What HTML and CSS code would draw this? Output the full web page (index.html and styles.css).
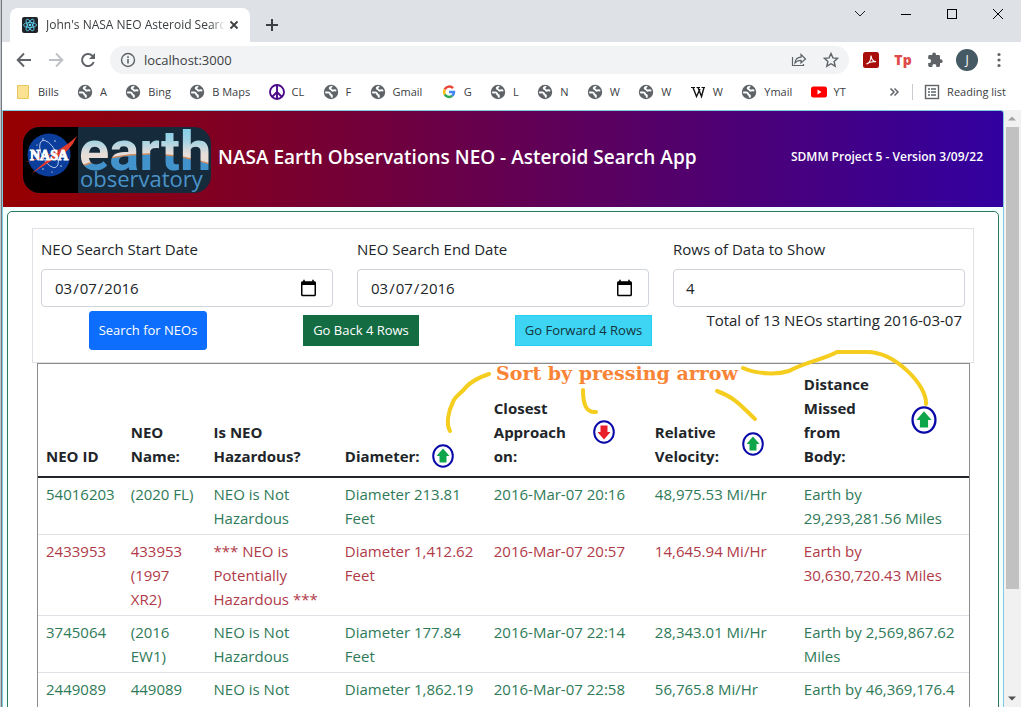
FILE: index.html
```
<!DOCTYPE html>
<html lang="en">
<head>
<meta charset="utf-8">
<title>John's NASA NEO Asteroid Search</title>
<link rel="stylesheet" href="styles.css">
</head>
<body>
<svg class="sprite" aria-hidden="true">
  <symbol id="globe" viewBox="0 0 16 16"><circle cx="8" cy="8" r="7.2" fill="#5f6368"/><path d="M2.2 8.2c1.6.9 2.3-.3 3.9.4 1.500.7.500 2 2 2.300.900.2 1 .9.400 2.700M9 2.200c-.6 1.200-2.300.8-2.300 2.100 0 1 1.600.500 1.800 1.400.2 1.100 1.200 1.300 2.200.7.9-.5 1.700.2 2.600.200" fill="none" stroke="#fff" stroke-width="1.900"/></symbol>
  <symbol id="sort-up" viewBox="0 0 22 24"><ellipse cx="11" cy="12" rx="9.800" ry="10.800" fill="#fff" stroke="#0a0aa8" stroke-width="2"/><path d="M11 4.500l6.500 7.500h-3v6.500h-7V12h-3z" fill="#0fa64b"/></symbol>
  <symbol id="sort-down" viewBox="0 0 22 24"><ellipse cx="11" cy="12" rx="9.800" ry="10.800" fill="#fff" stroke="#0a0aa8" stroke-width="2"/><path d="M11 19.500l6.500-7.500h-3V5.500h-7V12h-3z" fill="#e8202a"/></symbol>
</svg>
<div class="window">
  <header class="tabstrip">
    <div class="tab">
      <svg class="favicon" viewBox="0 0 16 16"><rect width="16" height="16" rx="2" fill="#20232a"/><g fill="none" stroke="#61dafb" stroke-width=".8"><ellipse cx="8" cy="8" rx="6.500" ry="2.500"/><ellipse cx="8" cy="8" rx="6.500" ry="2.500" transform="rotate(60 8 8)"/><ellipse cx="8" cy="8" rx="6.500" ry="2.500" transform="rotate(120 8 8)"/></g><circle cx="8" cy="8" r="1.300" fill="#61dafb"/></svg>
      <span class="tab-title">John's NASA NEO Asteroid Search</span>
      <button class="icon-btn" aria-label="Close tab"><svg width="10" height="10" viewBox="0 0 10 10"><path d="M1.500 1.500l7 7M8.500 1.500l-7 7" stroke="#3c4043" stroke-width="1.800"/></svg></button>
    </div>
    <button class="icon-btn new-tab" aria-label="New tab"><svg width="12" height="12" viewBox="0 0 12 12"><path d="M6 0v12M0 6h12" stroke="#3c4043" stroke-width="2"/></svg></button>
    <div class="window-buttons">
      <button class="icon-btn" aria-label="Search tabs"><svg width="12" height="12" viewBox="0 0 12 12"><path d="M1 3l5 5 5-5" fill="none" stroke="#222"/></svg></button>
      <button class="icon-btn" aria-label="Minimize"><svg width="12" height="12" viewBox="0 0 12 12"><path d="M1 6.500h10" stroke="#000"/></svg></button>
      <button class="icon-btn" aria-label="Maximize"><svg width="12" height="12" viewBox="0 0 12 12"><rect x="1.500" y="1.500" width="9" height="9" fill="none" stroke="#000"/></svg></button>
      <button class="icon-btn" aria-label="Close"><svg width="12" height="12" viewBox="0 0 12 12"><path d="M1 1l10 10M11 1L1 11" stroke="#000"/></svg></button>
    </div>
  </header>

  <div class="toolbar">
    <button class="icon-btn" aria-label="Back"><svg width="16" height="16" viewBox="0 0 16 16"><path d="M15 8H2M8 1.500L1.700 8 8 14.500" fill="none" stroke="#5f6368" stroke-width="1.900"/></svg></button>
    <button class="icon-btn" aria-label="Forward"><svg width="16" height="16" viewBox="0 0 16 16"><path d="M1 8h13M8 1.500L14.300 8 8 14.500" fill="none" stroke="#bdc1c6" stroke-width="1.900"/></svg></button>
    <button class="icon-btn" aria-label="Reload"><svg width="16" height="16" viewBox="0 0 16 16"><path d="M13.700 10A6 6 0 1 1 12.300 3.800L14 5.500" fill="none" stroke="#5f6368" stroke-width="2"/><path d="M15 1v6H9z" fill="#5f6368"/></svg></button>
    <div class="omnibox">
      <svg width="16" height="16" viewBox="0 0 16 16"><circle cx="8" cy="8" r="6.500" fill="none" stroke="#5f6368" stroke-width="1.400"/><path d="M8 7v4.500M8 4.300V6" stroke="#5f6368" stroke-width="1.600"/></svg>
      <input class="url" type="text" value="localhost:3000" aria-label="Address">
      <button class="icon-btn" aria-label="Share"><svg width="16" height="16" viewBox="0 0 16 16"><path d="M1.500 5v8.500h11V12M4 11c.3-3.500 2.300-5.500 6-5.800V2.500L14.500 7 10 11V8.300C7.500 8.300 5.500 9 4 11z" fill="none" stroke="#5f6368" stroke-width="1.200"/></svg></button>
      <button class="icon-btn" aria-label="Bookmark"><svg width="16" height="16" viewBox="0 0 16 16"><path d="M8 1.500l1.900 4.400 4.800.4-3.600 3.200 1.100 4.700L8 11.700l-4.200 2.500 1.100-4.700L1.300 6.300l4.800-.4z" fill="none" stroke="#5f6368" stroke-width="1.400"/></svg></button>
    </div>
    <div class="extensions">
      <button class="icon-btn" aria-label="Adobe Acrobat"><svg width="16" height="16" viewBox="0 0 16 16"><rect width="16" height="16" rx="2.500" fill="#a80f0a"/><path d="M3.500 12C6 11.500 8 8 8 3.500c.4 4 2 6 5 6.200-3.500-.4-6.500 0-9.500 2.300z" fill="none" stroke="#fff" stroke-width="1.200"/></svg></button>
      <button class="icon-btn tp" aria-label="Tp extension">Tp</button>
      <button class="icon-btn" aria-label="Extensions"><svg width="16" height="16" viewBox="0 0 16 16"><path d="M13.800 7.300h-.8V4.500c0-.8-.6-1.400-1.400-1.400H9V2.500a1.900 1.900 0 0 0-3.800 0v.600H2.600c-.8 0-1.400.6-1.400 1.400v2.500h.9a2 2 0 0 1 0 4h-.9v2.600c0 .8.600 1.400 1.400 1.400h2.700v-.9a2 2 0 0 1 4 0v.9h2.300c.8 0 1.400-.6 1.400-1.400V11h.8a1.850 1.850 0 0 0 0-3.700z" fill="#5f6368"/></svg></button>
      <button class="avatar" aria-label="Profile J">J</button>
      <button class="icon-btn" aria-label="Menu"><svg width="16" height="16" viewBox="0 0 16 16" fill="#5f6368"><circle cx="8" cy="2.500" r="1.600"/><circle cx="8" cy="8" r="1.600"/><circle cx="8" cy="13.500" r="1.600"/></svg></button>
    </div>
  </div>

  <nav class="bookmarks" aria-label="Bookmarks">
    <div class="bookmark-list">
      <a href="#"><svg viewBox="0 0 16 16"><path d="M2.500 1.500h11v13h-11z" fill="#fde293" stroke="#e6c65c"/><path d="M12 11.500h2v3h-2z" fill="#f9d66b"/></svg>Bills</a>
      <a href="#"><svg><use href="#globe"/></svg>A</a>
      <a href="#"><svg><use href="#globe"/></svg>Bing</a>
      <a href="#"><svg><use href="#globe"/></svg>B Maps</a>
      <a href="#"><svg viewBox="0 0 16 16"><g fill="none" stroke="#4b0a8a" stroke-width="1.900"><circle cx="8" cy="8" r="7"/><path d="M8 1v14M8 8l-5 5M8 8l5 5"/></g></svg>CL</a>
      <a href="#"><svg><use href="#globe"/></svg>F</a>
      <a href="#"><svg><use href="#globe"/></svg>Gmail</a>
      <a href="#"><svg viewBox="0 0 16 16"><g fill="none" stroke-width="2.500"><path d="M12 4.200A5 5 0 0 0 3.700 5.600" stroke="#ea4335"/><path d="M3.700 5.600a5 5 0 0 0 0 4.800" stroke="#fbbc05"/><path d="M3.700 10.400a5 5 0 0 0 7.500 1.400" stroke="#34a853"/><path d="M11.200 11.800A5 5 0 0 0 13 8H8" stroke="#4285f4"/></g></svg>G</a>
      <a href="#"><svg><use href="#globe"/></svg>L</a>
      <a href="#"><svg><use href="#globe"/></svg>N</a>
      <a href="#"><svg><use href="#globe"/></svg>W</a>
      <a href="#"><svg><use href="#globe"/></svg>W</a>
      <a href="#"><svg viewBox="0 0 16 16"><path d="M1 3.500h4M6.500 3.500h3.500M11.500 3.500H15" stroke="#111"/><path d="M3 3.500l3.500 9L10 5M8 3.500l3.500 9 2.500-9" fill="none" stroke="#111" stroke-width="1.400"/></svg>W</a>
      <a href="#"><svg><use href="#globe"/></svg>Ymail</a>
      <a href="#"><svg viewBox="0 0 16 16"><rect y="2.500" width="16" height="11" rx="2.500" fill="#f00"/><path d="M6.500 5.500v5l4-2.500z" fill="#fff"/></svg>YT</a>
    </div>
    <div class="bookmark-end">
      <button class="icon-btn" aria-label="More bookmarks"><svg width="10" height="10" viewBox="0 0 10 10"><path d="M1.500 1.500L5 5 1.500 8.500M5.500 1.500L9 5 5.500 8.500" fill="none" stroke="#5f6368" stroke-width="1.500"/></svg></button>
      <a class="reading" href="#"><svg viewBox="0 0 16 16"><g fill="none" stroke="#5f6368" stroke-width="1.400"><rect x="1.500" y="1.500" width="13" height="13"/><path d="M4 5h2M7 5h5M4 8h2M7 8h5M4 11h2M7 11h5"/></g></svg>Reading list</a>
    </div>
  </nav>

  <div class="viewport">
    <div class="app">
      <header class="banner">
        <svg class="logo" viewBox="0 0 188 66" role="img" aria-label="NASA Earth Observatory">
          <defs>
            <clipPath id="pill"><rect width="188" height="66" rx="17"/></clipPath>
            <linearGradient id="sky" x1="0" y1="0" x2="0" y2="44" gradientUnits="userSpaceOnUse"><stop offset="0" stop-color="#7fd0ea"/><stop offset=".3" stop-color="#a0d3e4"/><stop offset=".62" stop-color="#e9ddd8"/></linearGradient>
            <pattern id="planet" width="188" height="66" patternUnits="userSpaceOnUse">
              <rect width="188" height="66" fill="url(#sky)"/>
              <path d="M50 42Q120 14 190 38V66H50z" fill="#4292cb" stroke="#c98a62" stroke-width="1.500"/>
            </pattern>
          </defs>
          <g clip-path="url(#pill)">
            <rect width="188" height="66" fill="#152a3a"/><rect width="55" height="66" fill="#000"/>
            <circle cx="26" cy="28" r="21.500" fill="#0b3d9c"/>
            <ellipse cx="26" cy="27" rx="7" ry="15" transform="rotate(-28 26 27)" fill="none" stroke="#c9d6f2" stroke-width=".8"/>
            <path d="M2 35Q36 27 54 9Q47 26 31 32L8 47Q24 33 42 19Q28 31 2 35z" fill="#e23a2c"/>
            <g fill="#fff"><circle cx="20" cy="12" r=".7"/><circle cx="32" cy="14" r=".7"/><circle cx="14" cy="18" r=".6"/><circle cx="38" cy="39" r=".7"/><circle cx="20" cy="42" r=".7"/><circle cx="29" cy="45" r=".6"/></g>
            <text class="logo-nasa" x="26" y="33" text-anchor="middle">NASA</text>
            <text class="logo-earth" x="56" y="43">earth</text>
            <text class="logo-obs" x="57" y="60">observatory</text>
          </g>
        </svg>
        <h1>NASA Earth Observations NEO - Asteroid Search App</h1>
        <p class="version">SDMM Project 5 - Version 3/09/22</p>
      </header>

      <main class="card">
        <form class="search">
          <div class="fields">
            <label>NEO Search Start Date<input type="date" value="2016-03-07"></label>
            <label>NEO Search End Date<input type="date" value="2016-03-07"></label>
            <label>Rows of Data to Show<input type="text" value="4"></label>
          </div>
          <div class="actions">
            <button type="button" class="btn primary">Search for NEOs</button>
            <button type="button" class="btn back">Go Back 4 Rows</button>
            <button type="button" class="btn forward">Go Forward 4 Rows</button>
            <p class="total">Total of 13 NEOs starting 2016-03-07</p>
          </div>
        </form>

        <div class="results">
          <table>
            <colgroup><col class="c-id"><col class="c-name"><col class="c-haz"><col class="c-dia"><col class="c-date"><col class="c-vel"><col class="c-dist"></colgroup>
            <thead>
              <tr>
                <th>NEO ID</th>
                <th>NEO Name:</th>
                <th>Is NEO Hazardous?</th>
                <th><div class="sortable"><span>Diameter:</span><button aria-label="Sort by diameter"><svg><use href="#sort-up"/></svg></button></div></th>
                <th><div class="sortable"><span>Closest Approach on:</span><button aria-label="Sort by approach"><svg><use href="#sort-down"/></svg></button></div></th>
                <th><div class="sortable"><span>Relative Velocity:</span><button aria-label="Sort by velocity"><svg><use href="#sort-up"/></svg></button></div></th>
                <th><div class="sortable large"><span>Distance Missed from Body:</span><button aria-label="Sort by distance"><svg><use href="#sort-up"/></svg></button></div></th>
              </tr>
            </thead>
            <tbody>
              <tr class="safe"><td>54016203</td><td>(2020 FL)</td><td>NEO is Not Hazardous</td><td>Diameter 213.81 Feet</td><td>2016-Mar-07 20:16</td><td>48,975.53 Mi/Hr</td><td>Earth by 29,293,281.56 Miles</td></tr>
              <tr class="hazard"><td>2433953</td><td>433953 (1997 XR2)</td><td>*** NEO is Potentially Hazardous ***</td><td>Diameter 1,412.62 Feet</td><td>2016-Mar-07 20:57</td><td>14,645.94 Mi/Hr</td><td>Earth by 30,630,720.43 Miles</td></tr>
              <tr class="safe"><td>3745064</td><td>(2016 EW1)</td><td>NEO is Not Hazardous</td><td>Diameter 177.84 Feet</td><td>2016-Mar-07 22:14</td><td>28,343.01 Mi/Hr</td><td>Earth by 2,569,867.62 Miles</td></tr>
              <tr class="safe"><td>2449089</td><td>449089</td><td>NEO is Not Hazardous</td><td>Diameter 1,862.19 Feet</td><td>2016-Mar-07 22:58</td><td>56,765.8 Mi/Hr</td><td>Earth by 46,369,176.4 Miles</td></tr>
            </tbody>
          </table>
          <svg class="notes" viewBox="440 345 495 95">
            <g fill="none" stroke="#f5cd1e" stroke-width="4" stroke-linecap="round" stroke-linejoin="round">
              <path d="M490 374Q475 379 467 387C462 394 456 396 454 402C449 412 447 424 451 431"/>
              <path d="M584 390C584 404 587 413 597 412"/>
              <path d="M718 391C737 398 742 406 756 419"/>
              <path d="M744 368C758 374 777 375 790 371C806 362 826 359 838 352H868C896 352 928 385 927 404"/>
            </g>
            <text class="note-text" x="497" y="380">Sort by pressing arrow</text>
          </svg>
        </div>
      </main>
    </div>
    <div class="scrollbar" aria-hidden="true">
      <svg viewBox="0 0 16 17"><path d="M4 10.500h8L8 6.500z" fill="#a3a3a3"/></svg>
      <div class="track"><div class="thumb"></div></div>
      <svg viewBox="0 0 16 17"><path d="M4 6.500h8l-4 4z" fill="#505050"/></svg>
    </div>
  </div>
</div>
</body>
</html>
```

FILE: styles.css
```
* { box-sizing: border-box; }

body {
  margin: 0;
  height: 100vh;
  overflow: hidden;
  border-left: 1px solid #c4c8cc;
  font-family: "Open Sans", "Noto Sans", sans-serif;
  font-size: 15px;
  line-height: 24px;
  color: #212529;
  background: #fff;
}

button, input { font: inherit; color: inherit; }
a { color: inherit; text-decoration: none; }
h1, p { margin: 0; }
svg { display: block; flex: none; }
.sprite { position: absolute; width: 0; height: 0; }

.window {
  display: flex;
  flex-direction: column;
  height: 100%;
  border-left: 1px solid #74797d;
}

.icon-btn {
  display: flex;
  align-items: center;
  justify-content: center;
  flex: none;
  padding: 0;
  border: 0;
  background: none;
}

/* Browser frame */
.tabstrip {
  display: flex;
  flex: none;
  height: 42px;
  padding-left: 8px;
  background: #dee1e6;
}
.tab {
  display: flex;
  align-items: center;
  gap: 8px;
  width: 240px;
  margin-top: 8px;
  padding: 0 11px 0 12px;
  border-radius: 8px 8px 0 0;
  background: #fff;
  font-size: 12px;
  color: #3c4043;
}
.favicon { width: 16px; height: 16px; }
.tab-title {
  flex: 1;
  margin-right: -4px;
  overflow: hidden;
  white-space: nowrap;
  mask-image: linear-gradient(to right, #000 92%, transparent);
}
.new-tab { margin: 8px 0 0 16px; }
.window-buttons {
  display: flex;
  align-items: center;
  gap: 34px;
  height: 28px;
  margin-left: auto;
  padding-right: 17px;
}

.toolbar {
  display: flex;
  align-items: center;
  flex: none;
  gap: 16px;
  height: 36px;
  padding: 0 14px;
}
.omnibox {
  display: flex;
  align-items: center;
  flex: 1;
  gap: 16px;
  height: 28px;
  margin-left: -2px;
  padding: 0 10px;
  border-radius: 14px;
  background: #f1f3f4;
}
.url {
  flex: 1;
  min-width: 0;
  margin-left: -8px;
  padding: 0;
  border: 0;
  background: none;
  font-size: 13px;
  color: #3c4043;
}
.extensions { display: flex; align-items: center; gap: 16px; margin-left: -2px; }
.extensions .avatar { margin: 0 -3px; }
.tp { width: 16px; font-size: 14px; font-weight: 800; color: #e04a48; }
.avatar {
  width: 22px;
  height: 22px;
  padding: 0;
  border: 0;
  border-radius: 50%;
  background: #455a64;
  color: #fff;
  font-size: 12px;
  line-height: 22px;
}

.bookmarks {
  display: flex;
  align-items: center;
  justify-content: space-between;
  flex: none;
  height: 32px;
  padding: 0 15px 4px 13px;
  font-size: 11px;
  color: #3c4043;
}
.bookmarks a { display: flex; align-items: center; gap: 7px; }
.bookmarks a svg { width: 16px; height: 16px; }
.bookmark-list { display: flex; justify-content: space-between; flex: 0 1 831px; }
.bookmark-list a { height: 20px; }
.bookmark-end { display: flex; align-items: center; gap: 13px; }
.reading { padding-left: 11px; border-left: 1px solid #c8cbcf; height: 16px; }

/* Page area */
.viewport { display: flex; flex: 1; min-height: 0; }
.app {
  flex: 1;
  min-width: 0;
  overflow: hidden;
  border: 1px solid #7fcbe0;
  border-bottom: 0;
  border-radius: 0 3px 0 0;
  background: #f2fffe;
}
.banner {
  display: flex;
  align-items: center;
  gap: 7px;
  padding: 16px 20px 14px;
  background: linear-gradient(to right, #960000, #3200a0);
  color: #fff;
}
.logo { width: 188px; height: 66px; }
.logo-nasa { font: bold 14px "Liberation Serif", serif; fill: #fff; stroke: #fff; }
.logo-earth { font: bold 56px Roboto, sans-serif; fill: url(#planet); }
.logo-obs { font: 22px "Open Sans", sans-serif; fill: #4a93c9; }
.banner h1, .version { padding-bottom: 6px; white-space: nowrap; }
.banner h1 { font-size: 19px; font-weight: 600; }
.version { margin-left: auto; font-size: 12px; font-weight: 600; }

.card {
  margin: 4px;
  padding: 16px 24px;
  border: 1px solid #2b7a5c;
  border-radius: 5px;
  background: #fff;
}
.search { padding: 8px; border: 1px solid #dee2e6; }
.fields { display: grid; grid-template-columns: repeat(3, 1fr); gap: 24px; }
.fields label { display: flex; flex-direction: column; gap: 8px; min-width: 0; }
.fields input {
  width: 100%;
  height: 38px;
  padding: 6px 12px;
  border: 1px solid #ced4da;
  border-radius: 4px;
  background: #fff;
}
.fields input[type="date"] { padding-right: 14px; }
.fields input::-webkit-calendar-picker-indicator { width: 19px; height: 19px; padding: 0; background-size: contain; }
.actions {
  display: grid;
  grid-template-columns: 214fr 212fr 233fr 265fr;
  align-items: center;
  justify-items: center;
  padding: 4px 0;
}
.btn { padding: 0 9px; border: 1px solid; font-size: 13px; line-height: 29px; white-space: nowrap; }
.primary { border-color: #0d6efd; border-radius: 3px; background: #0d6efd; color: #fff; line-height: 37px; }
.back { border-color: #146c43; background: #146c43; color: #fff; }
.forward { border-color: #25cff2; background: #3dd5f3; color: #14343c; }
.total { justify-self: end; align-self: start; padding-right: 3px; line-height: 18px; white-space: nowrap; }

.results { position: relative; margin: 0 4px 0 5px; }
table {
  width: 100%;
  table-layout: fixed;
  border: 1px solid #8c8c8c;
  border-spacing: 0;
}
.c-id { width: 9.1%; }
.c-name { width: 8.9%; }
.c-haz { width: 14.1%; }
.c-dia { width: 16%; }
.c-date { width: 17.3%; }
.c-vel { width: 16%; }
.c-dist { width: 18.6%; }
th {
  padding: 8px;
  border-bottom: 2px solid #212529;
  text-align: left;
  vertical-align: bottom;
  font-weight: 700;
}
td { padding: 4px 8px; border-bottom: 1px solid #dee2e6; vertical-align: top; }
td:first-child { white-space: nowrap; }
.safe { color: #2f7a58; }
.hazard { color: #b03a48; }
.sortable { display: flex; align-items: center; justify-content: space-between; padding-right: 24px; }
.sortable span { max-width: 76px; }
.sortable button { flex: none; padding: 0; border: 0; background: none; }
.sortable svg { width: 22px; height: 24px; }
.large svg { width: 26px; height: 28px; }

.notes { position: absolute; left: 402px; top: -18px; width: 495px; height: 95px; pointer-events: none; }
.note-text { font: bold 19px "DejaVu Serif", serif; fill: #f98436; }

.scrollbar { display: flex; flex-direction: column; width: 17px; background: #f1f1f1; }
.scrollbar svg { width: 16px; height: 17px; }
.track { flex: 1; padding: 0 2px; }
.thumb { height: 82%; background: #c1c1c1; }
```
